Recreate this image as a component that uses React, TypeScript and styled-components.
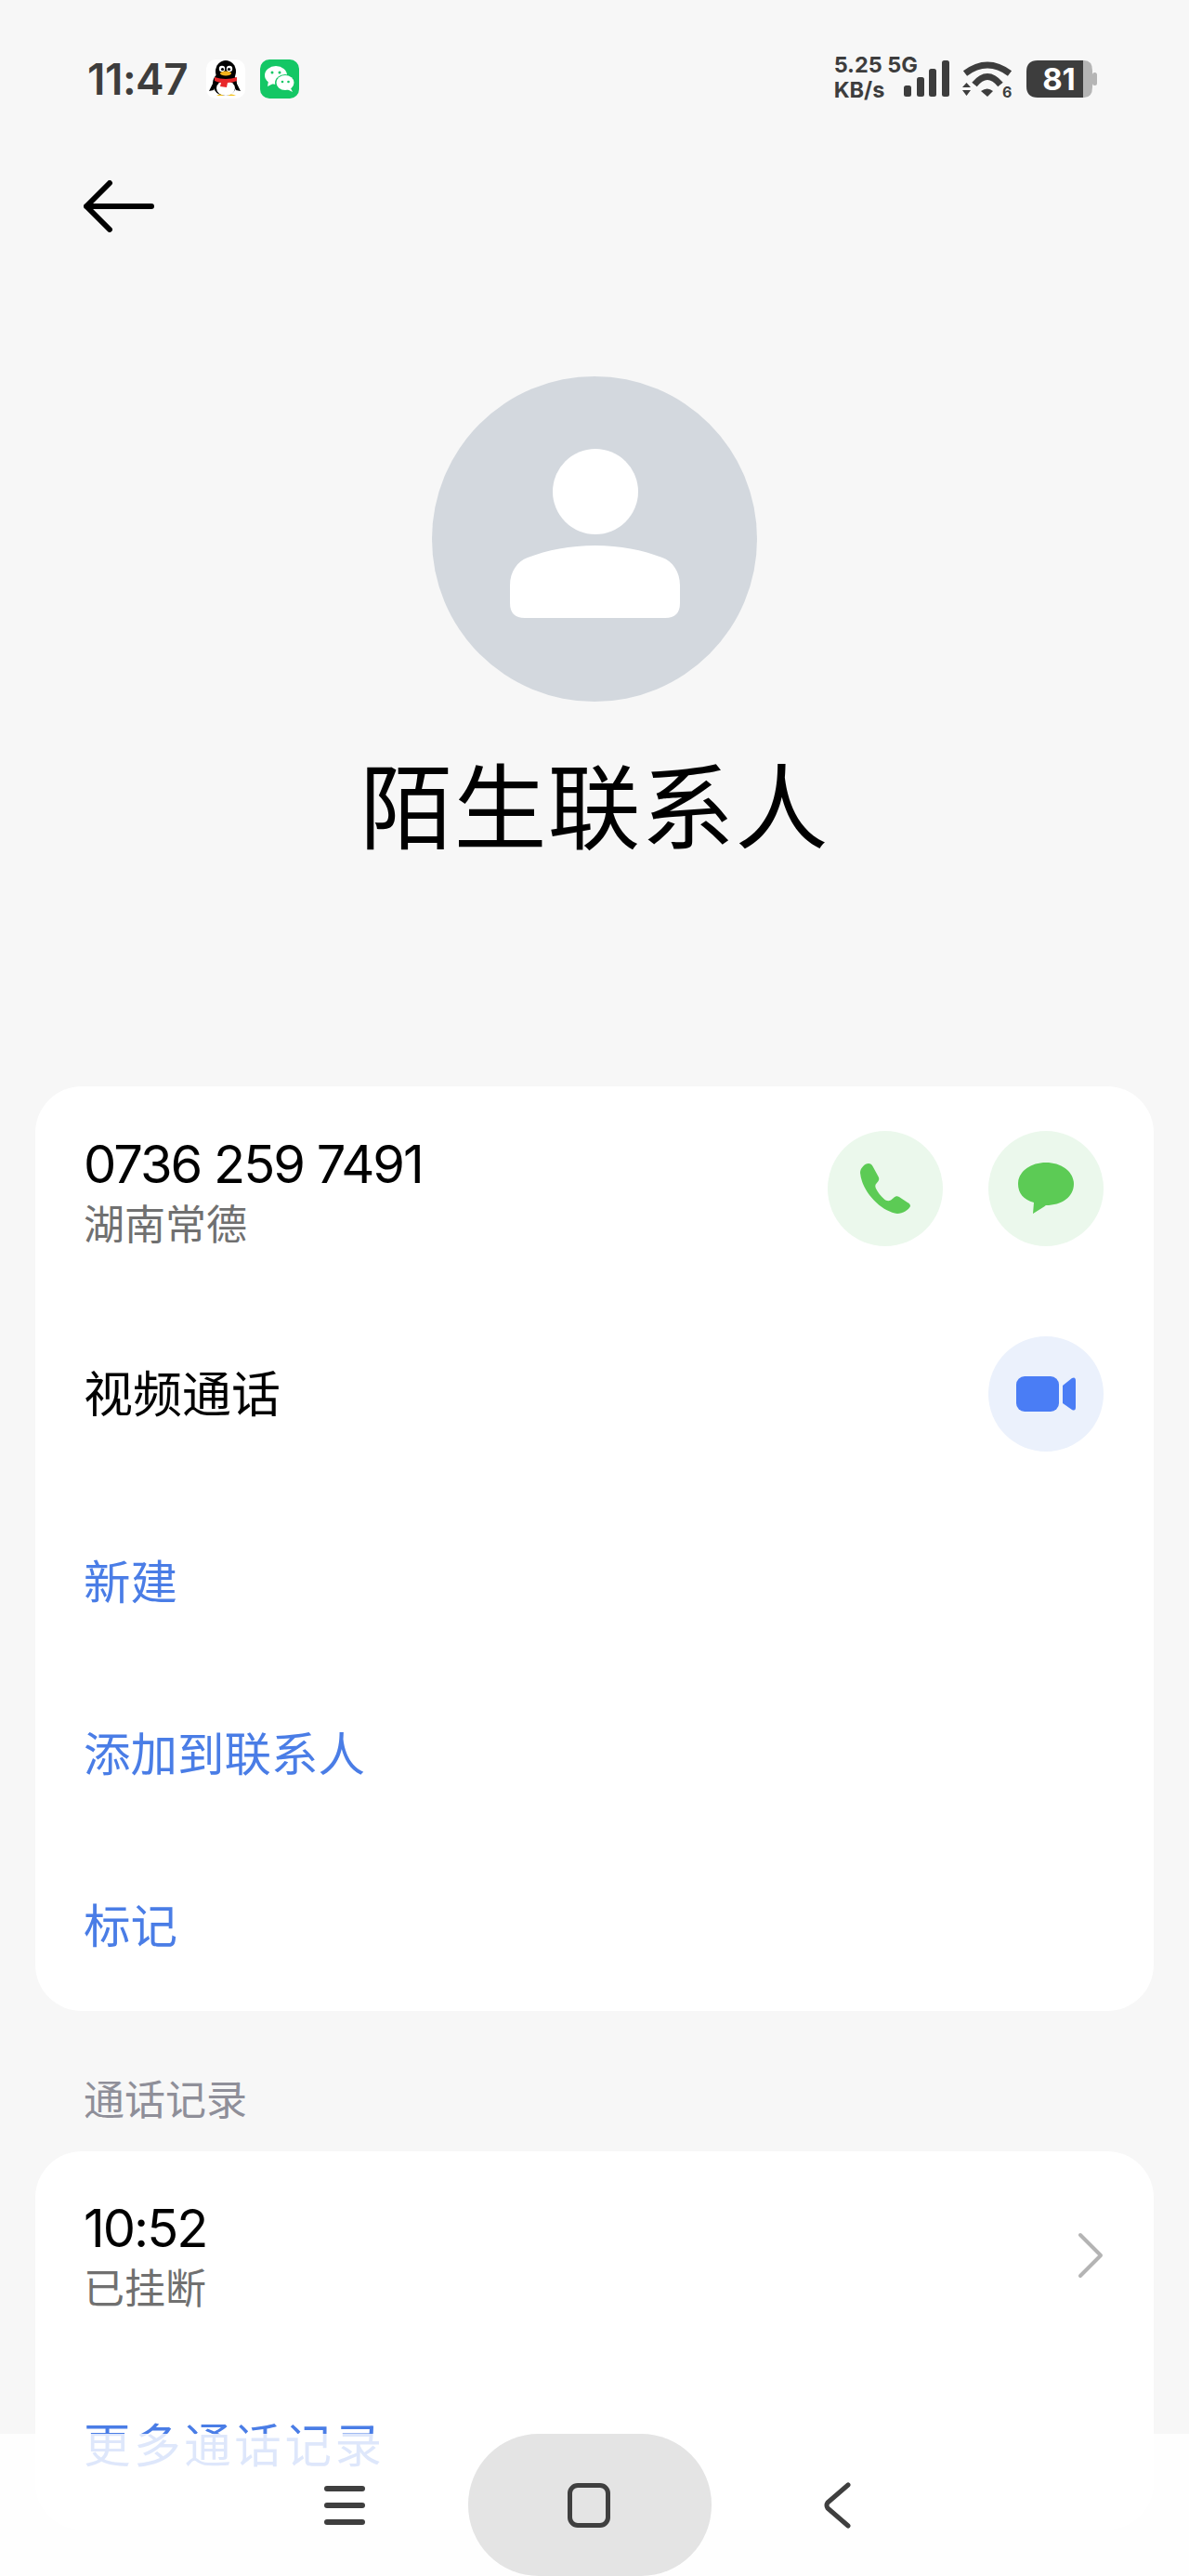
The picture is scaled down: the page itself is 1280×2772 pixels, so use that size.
import styled, { createGlobalStyle } from "styled-components";

const GlobalStyle = createGlobalStyle`
  html, body {
    margin: 0;
    padding: 0;
    background: #f7f7f7;
  }
`;

const CJK = `Inter, "Noto Sans CJK SC", "Noto Sans", sans-serif`;

const Page = styled.div`
  position: relative;
  width: 1280px;
  height: 2772px;
  overflow: hidden;
  background: #f7f7f7;
  font-family: ${CJK};
`;

// status bar
const StatusBar = styled.div`
  height: 170px;
  box-sizing: border-box;
  padding: 60px 99px 0 94px;
  display: flex;
  justify-content: space-between;
  align-items: flex-start;
`;

const StatusLeft = styled.div`
  display: flex;
  align-items: center;
  height: 50px;
`;

const Clock = styled.span`
  font-size: 46px;
  font-weight: 600;
  color: #3d3d3d;
  letter-spacing: -0.5px;
  margin-right: 20px;
`;

const AppIcon = styled.svg`
  width: 42px;
  height: 42px;
  margin-right: 16px;
  display: block;
`;

const StatusRight = styled.div`
  display: flex;
  align-items: flex-start;
  padding-top: 5px;
`;

const NetSpeed = styled.div`
  display: flex;
  flex-direction: column;
  margin-top: -9px;
  font-size: 23.5px;
  line-height: 27px;
  font-weight: 700;
  color: #3d3d3d;
  white-space: nowrap;
`;

const SignalGlyph = styled.svg`
  display: block;
  margin-left: -15px;
`;

const WifiGlyph = styled.svg`
  display: block;
  margin-left: 13px;
`;

const BatteryGlyph = styled.svg`
  display: block;
  margin-left: 13px;
  margin-top: -1px;
`;

// header
const BackRow = styled.div`
  height: 235px;
  padding-left: 90px;
  padding-top: 24px;
  box-sizing: border-box;
`;

const BackArrow = styled.svg`
  display: block;
  width: 76px;
  height: 56px;
`;

const Avatar = styled.div`
  width: 350px;
  height: 350px;
  margin: 0 auto;
  border-radius: 50%;
  background: #d3d8de;
  display: flex;
  align-items: center;
  justify-content: center;
  svg {
    margin-bottom: 12px;
  }
`;

const Name = styled.h1`
  margin: 50px 0 0;
  height: 130px;
  line-height: 130px;
  text-align: center;
  font-size: 100px;
  font-weight: 400;
  letter-spacing: 1px;
  color: #000;
`;

// cards
const Card = styled.section`
  margin: 0 38px;
  background: #fff;
  border-radius: 50px;
  box-sizing: border-box;
  padding: 0 54px 0 52px;
`;

const ContactCard = styled(Card)`
  margin-top: 234px;
  height: 995px;
  padding-top: 48px;
`;

const HistoryCard = styled(Card)`
  height: 407px;
  padding-top: 50px;
`;

const Row = styled.div`
  display: flex;
  justify-content: space-between;
  align-items: center;
`;

const NumberRow = styled(Row)`
  height: 124px;
  align-items: flex-start;
`;

const NumberBlock = styled.div`
  margin-top: 3px;
`;

const VideoRow = styled(Row)`
  height: 124px;
  margin-top: 97px;
`;

const Primary = styled.div`
  font-size: 56px;
  line-height: 66px;
  letter-spacing: -2px;
  color: #000;
`;

const Label = styled.div`
  font-size: 53px;
  line-height: 70px;
  margin-top: 2px;
  color: #000;
`;

const Secondary = styled.div`
  margin-top: 6px;
  font-size: 44px;
  line-height: 52px;
  color: #707070;
`;

const Actions = styled.div`
  display: flex;
  gap: 49px;
`;

const RoundButton = styled.div<{ $tint: string }>`
  width: 124px;
  height: 124px;
  border-radius: 50%;
  background: ${(p) => p.$tint};
  display: flex;
  align-items: center;
  justify-content: center;
`;

const LinkList = styled.div`
  margin-top: 104px;
  display: flex;
  flex-direction: column;
  gap: 111px;
`;

const ActionLink = styled.div<{ $wide?: boolean }>`
  font-size: 50.5px;
  line-height: 74px;
  color: #4a7de6;
  letter-spacing: ${(p) => (p.$wide ? "3.6px" : "0")};
`;

const SectionTitle = styled.div`
  height: 151px;
  box-sizing: border-box;
  padding: 70px 0 0 90px;
  font-size: 44px;
  line-height: 52px;
  color: #8f8f99;
`;

const MoreLink = styled(ActionLink)`
  margin-top: 106px;
`;

const Chevron = styled.svg`
  display: block;
  width: 28px;
  height: 50px;
`;

// nav bar lying over the page
const NavBar = styled.nav`
  position: absolute;
  left: 0;
  right: 0;
  bottom: 0;
  height: 153px;
  box-sizing: border-box;
  padding-right: 14px;
  background: rgba(255, 255, 255, 0.82);
  display: flex;
  justify-content: center;
  align-items: center;
`;

const NavMenu = styled.div`
  width: 44px;
  display: flex;
  flex-direction: column;
  gap: 12px;
  margin-right: 111px;
  span {
    display: block;
    height: 6px;
    border-radius: 3px;
    background: #3f3f3f;
  }
`;

const HomePill = styled.div`
  width: 262px;
  height: 153px;
  border-radius: 76px;
  background: #e4e4e4;
  display: flex;
  align-items: center;
  justify-content: center;
`;

const HomeSquare = styled.div`
  width: 46px;
  height: 48px;
  box-sizing: border-box;
  margin-left: -3px;
  border: 5px solid #3f3f3f;
  border-radius: 11px;
`;

const NavBack = styled.svg`
  display: block;
  width: 32px;
  height: 50px;
  margin-left: 119px;
`;

function QQIcon() {
  return (
    <AppIcon viewBox="0 0 42 42">
      <rect width="42" height="42" rx="10" fill="#fff" />
      <ellipse cx="20" cy="26" rx="13" ry="13" fill="#000" />
      <ellipse cx="21" cy="13" rx="11" ry="12" fill="#000" />
      <path d="M8 24 L3 34 L8 33 Z M32 24 L37 34 L32 33 Z" fill="#000" />
      <ellipse cx="21" cy="31" rx="10" ry="8" fill="#fff" />
      <circle cx="17" cy="10" r="3.2" fill="#fff" />
      <circle cx="25" cy="10" r="3.2" fill="#fff" />
      <circle cx="17.5" cy="10.5" r="1.6" fill="#000" />
      <circle cx="24.5" cy="10.5" r="1.6" fill="#000" />
      <ellipse cx="21" cy="15" rx="6" ry="2.4" fill="#f4b21b" />
      <path d="M9 19 Q21 23 33 19 L33 23 Q29 25 23 25 L22 30 L15 29 L16 25 Q11 24 9 23 Z" fill="#e8272a" />
      <path d="M11 39 Q15 36 19 39 Z M23 39 Q27 36 32 39 Z" fill="#f4c21b" />
    </AppIcon>
  );
}

function WeChatIcon() {
  return (
    <AppIcon viewBox="0 0 42 42">
      <rect width="42" height="42" rx="10" fill="#14c765" />
      <ellipse cx="17" cy="17" rx="12" ry="10" fill="#fff" />
      <path d="M9 23 L8 29 L14 26 Z" fill="#fff" />
      <ellipse cx="27" cy="25" rx="11" ry="9" fill="#14c765" />
      <ellipse cx="27" cy="25" rx="9.5" ry="8" fill="#fff" />
      <path d="M33 31 L35 35 L29 32 Z" fill="#fff" />
      <circle cx="13" cy="14" r="1.5" fill="#14c765" />
      <circle cx="21" cy="14" r="1.5" fill="#14c765" />
      <circle cx="24" cy="24" r="1.3" fill="#14c765" />
      <circle cx="30.5" cy="24" r="1.3" fill="#14c765" />
    </AppIcon>
  );
}

function SignalIcon() {
  return (
    <SignalGlyph width="50" height="40" viewBox="0 0 50 40">
      <g fill="#3d3d3d">
        <rect x="0" y="27" width="8" height="12" rx="2.5" />
        <rect x="14" y="18" width="8" height="21" rx="2.5" />
        <rect x="27" y="9" width="8" height="30" rx="2.5" />
        <rect x="41" y="0" width="8" height="39" rx="2.5" />
      </g>
    </SignalGlyph>
  );
}

function WifiIcon() {
  return (
    <WifiGlyph width="56" height="46" viewBox="0 0 56 46">
      <g fill="none" stroke="#3d3d3d" strokeLinecap="butt">
        <path d="M3 14 Q27 -4 51 14" strokeWidth="7" />
        <path d="M13 26 Q27 9 41 26" strokeWidth="7" />
      </g>
      <path d="M20 33 Q27 28 33 33 L27 39 Z" fill="#3d3d3d" />
      <path d="M4.5 24 L0 29 L9 29 Z M0 32 L9 32 L4.5 38 Z" fill="#3d3d3d" />
      <text x="43" y="40" fontSize="16" fontWeight="700" fill="#3d3d3d" fontFamily="Inter, sans-serif">6</text>
    </WifiGlyph>
  );
}

function BatteryIcon() {
  return (
    <BatteryGlyph width="76" height="42" viewBox="0 0 76 42">
      <path d="M56 1 H62 Q71 1 71 12 V30 Q71 41 62 41 H56 Z" fill="#b5b5b5" />
      <rect x="71" y="14" width="5" height="14" rx="2.5" fill="#b5b5b5" />
      <path d="M12 1 H61 V41 H12 Q0 41 0 29 V13 Q0 1 12 1 Z" fill="#3d3d3d" />
      <text x="35" y="33" textAnchor="middle" fontSize="33" fontWeight="700" fill="#fff" fontFamily="Inter, sans-serif">81</text>
    </BatteryGlyph>
  );
}

export default function App() {
  return (
    <Page>
      <GlobalStyle />
      <StatusBar>
        <StatusLeft>
          <Clock>11:47</Clock>
          <QQIcon />
          <WeChatIcon />
        </StatusLeft>
        <StatusRight>
          <NetSpeed>
            <span>5.25 5G</span>
            <span>KB/s</span>
          </NetSpeed>
          <SignalIcon />
          <WifiIcon />
          <BatteryIcon />
        </StatusRight>
      </StatusBar>

      <BackRow>
        <BackArrow viewBox="0 0 76 56" fill="none" stroke="#000" strokeWidth="6" strokeLinecap="round" strokeLinejoin="round">
          <path d="M3 28 H73 M28 3 L3 28 L28 53" />
        </BackArrow>
      </BackRow>

      <Avatar>
        <svg width="183" height="182" viewBox="0 0 183 182">
          <circle cx="92" cy="46" r="46" fill="#fff" />
          <path d="M0 147 C0 132 8 121 19 117 C40 109 65 104 92 104 C118 104 143 109 164 117 C175 121 183 132 183 147 V166 Q183 182 167 182 H16 Q0 182 0 166 Z" fill="#fff" />
        </svg>
      </Avatar>

      <Name>陌生联系人</Name>

      <ContactCard>
        <NumberRow>
          <NumberBlock>
            <Primary>0736 259 7491</Primary>
            <Secondary>湖南常德</Secondary>
          </NumberBlock>
          <Actions>
            <RoundButton $tint="#ebf8ec">
              <svg width="54" height="54" viewBox="0 0 54 54">
                <path
                  d="M9 0 C5 0 0 5 0 10 C2 32 24 52 40 54 C46 54 52 50 54 46 C54 44 53 43 51 42 L42 36 C40 34.5 38 35 36 37 L33 39.5 C30 41 28 40 26 38.5 C22 35 19 31 17 27 C16 25 16 23 17.5 21.5 L19.5 19 C20.5 17.5 20.5 15.5 19.5 14 L13.5 3 C12.5 1 11 0 9 0 Z"
                  fill="#5ccb55"
                />
              </svg>
            </RoundButton>
            <RoundButton $tint="#ebf8ec">
              <svg width="60" height="56" viewBox="0 0 60 56">
                <path
                  d="M30 0 C47 0 60 10 60 23 C60 37 47 46 30 46 C29.5 46 29 47 28 47.5 L16 55 L17 43 C6 40 0 33 0 23 C0 10 13 0 30 0 Z"
                  fill="#5ccb55"
                />
              </svg>
            </RoundButton>
          </Actions>
        </NumberRow>

        <VideoRow>
          <Label>视频通话</Label>
          <RoundButton $tint="#ebf1fc">
            <svg width="64" height="38" viewBox="0 0 64 38">
              <rect x="0" y="0" width="46" height="38" rx="9" fill="#4a7df5" />
              <path d="M50 10 L60 2 Q64 0 64 5 V33 Q64 38 60 36 L50 29 Z" fill="#4a7df5" />
            </svg>
          </RoundButton>
        </VideoRow>

        <LinkList>
          <ActionLink>新建</ActionLink>
          <ActionLink>添加到联系人</ActionLink>
          <ActionLink>标记</ActionLink>
        </LinkList>
      </ContactCard>

      <SectionTitle>通话记录</SectionTitle>

      <HistoryCard>
        <Row>
          <div>
            <Primary>10:52</Primary>
            <Secondary>已挂断</Secondary>
          </div>
          <Chevron viewBox="0 0 28 50" fill="none" stroke="#b4b4b4" strokeWidth="4" strokeLinecap="round" strokeLinejoin="round">
            <path d="M3 3 L25 25 L3 47" />
          </Chevron>
        </Row>
        <MoreLink $wide>更多通话记录</MoreLink>
      </HistoryCard>

      <NavBar>
        <NavMenu>
          <span />
          <span />
          <span />
        </NavMenu>
        <HomePill>
          <HomeSquare />
        </HomePill>
        <NavBack viewBox="0 0 32 50" fill="none" stroke="#3f3f3f" strokeWidth="5" strokeLinecap="round" strokeLinejoin="round">
          <path d="M28 3 L6 22 Q4 25 6 28 L28 47" />
        </NavBack>
      </NavBar>
    </Page>
  );
}
